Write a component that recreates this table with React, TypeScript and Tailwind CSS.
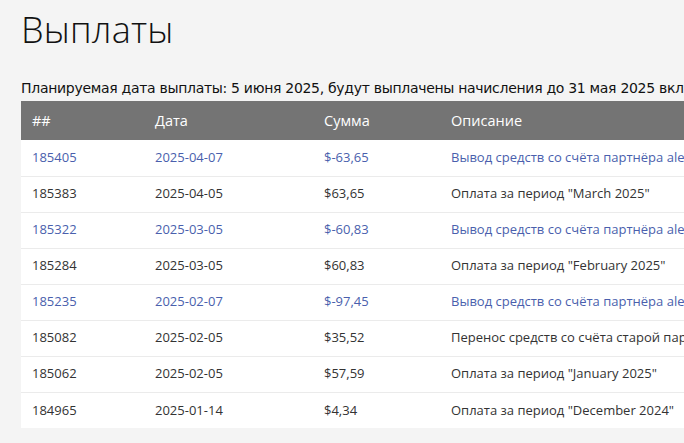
import React from 'react';

interface Payout {
  id: string;
  date: string;
  amount: string;
  description: string;
  link?: boolean;
}

const payouts: Payout[] = [
  { id: '185405', date: '2025-04-07', amount: '$-63,65', description: 'Вывод средств со счёта партнёра alexander', link: true },
  { id: '185383', date: '2025-04-05', amount: '$63,65', description: 'Оплата за период "March 2025"' },
  { id: '185322', date: '2025-03-05', amount: '$-60,83', description: 'Вывод средств со счёта партнёра alexander', link: true },
  { id: '185284', date: '2025-03-05', amount: '$60,83', description: 'Оплата за период "February 2025"' },
  { id: '185235', date: '2025-02-07', amount: '$-97,45', description: 'Вывод средств со счёта партнёра alexander', link: true },
  { id: '185082', date: '2025-02-05', amount: '$35,52', description: 'Перенос средств со счёта старой партнёрской программы' },
  { id: '185062', date: '2025-02-05', amount: '$57,59', description: 'Оплата за период "January 2025"' },
  { id: '184965', date: '2025-01-14', amount: '$4,34', description: 'Оплата за период "December 2024"' },
];

const App = () => {
  return (
    <div className="w-full h-[443px] overflow-hidden bg-[#f4f4f4] pl-[21px]">
      <h1 className="pt-[8px] text-[36px] leading-[44px] font-light text-[#111] font-['Open_Sans',sans-serif] tracking-[0.2px]">
        Выплаты
      </h1>
      <p className="mt-[27px] text-[14px] leading-[18px] text-[#111] whitespace-nowrap font-['DejaVu_Sans','Noto_Sans',sans-serif] tracking-[-0.3px]">
        Планируемая дата выплаты: 5 июня 2025, будут выплачены начисления до 31 мая 2025 включительно
      </p>
      <table className="mt-[4px] w-[900px] border-collapse bg-white font-['Open_Sans',sans-serif] text-[13px] whitespace-nowrap">
        <thead>
          <tr className="bg-[#747474] text-white h-[39px] text-[14.5px]">
            <th className="w-[123px] pl-[11px] text-left font-normal">##</th>
            <th className="w-[169px] pl-[11px] text-left font-normal">Дата</th>
            <th className="w-[127px] pl-[11px] text-left font-normal">Сумма</th>
            <th className="pl-[11px] text-left font-normal">Описание</th>
          </tr>
        </thead>
        <tbody>
          {payouts.map((p, i) => {
            const tone = p.link ? 'text-[#4a5fad]' : 'text-[#333]';
            return (
              <tr key={p.id} className={`h-[36px] ${i > 0 ? 'border-t border-[#ebebeb]' : ''} ${tone}`}>
                <td className="pl-[11px]">{p.id}</td>
                <td className="pl-[11px]">{p.date}</td>
                <td className="pl-[11px]">{p.amount}</td>
                <td className="pl-[11px]">{p.description}</td>
              </tr>
            );
          })}
        </tbody>
      </table>
    </div>
  );
};

export default App;
